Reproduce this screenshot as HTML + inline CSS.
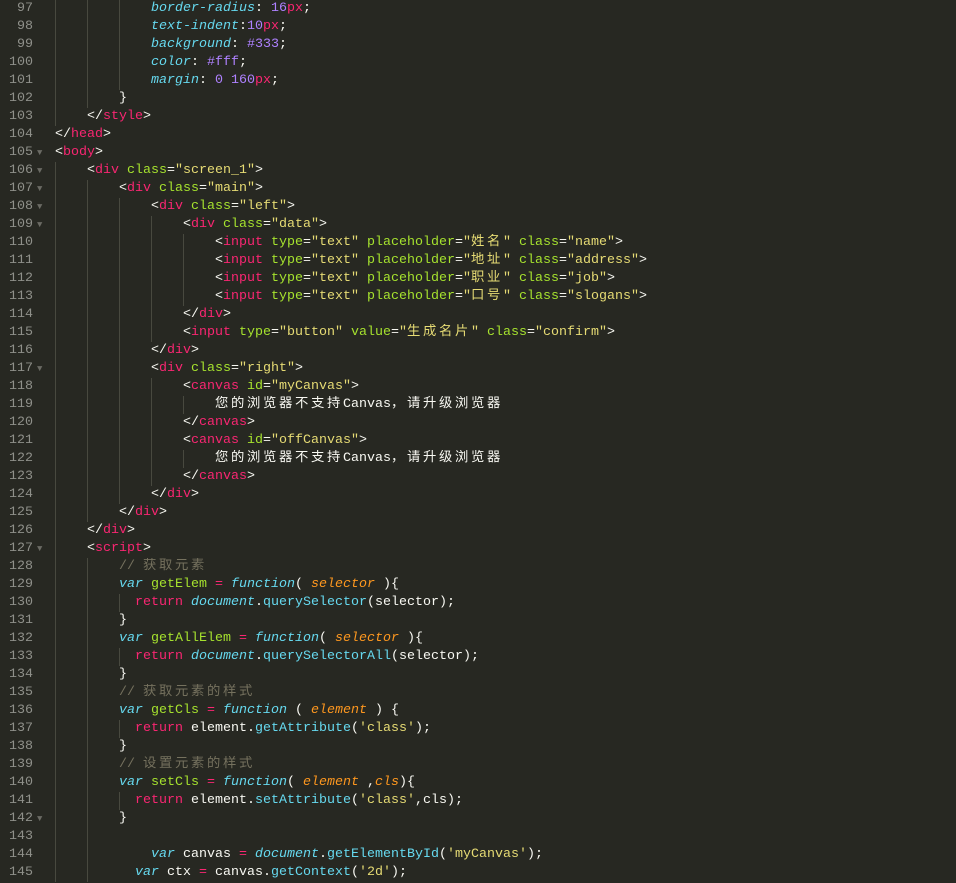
<!DOCTYPE html>
<html><head><meta charset="utf-8"><style>
html,body{margin:0;padding:0;background:#272822;width:956px;height:883px;overflow:hidden}
.l{position:relative;height:18px;line-height:18px;font-family:"Liberation Mono","Noto Sans CJK SC",monospace;font-size:13.33px;color:#f8f8f2;white-space:pre;overflow:hidden}
.n{position:absolute;left:0;width:33px;text-align:right;color:#8f908a}
.f{position:absolute;left:37px;top:0;color:#6b6b64;font-size:9px}
.c{position:absolute;left:55px;top:0;height:18px}
.g{position:absolute;left:55px;top:0;height:18px;background:repeating-linear-gradient(to right,#48493f 0 1px,transparent 1px 32px)}
.t{color:#f92672}.a{color:#a6e22e}.s{color:#e6db74}.m{color:#75715e}.k{color:#66d9ef;font-style:italic}
.b{color:#66d9ef}.p{color:#fd971f;font-style:italic}.u{color:#ae81ff}
.z{font-family:"Noto Sans CJK SC",sans-serif;letter-spacing:2.67px;display:inline-block;height:18px;line-height:18px;vertical-align:top;position:relative;top:-3px}
</style></head><body>
<div class="l"><span class="n">97</span><span class="g" style="width:65px"></span><span class="c">            <span class="k">border-radius</span>: <span class="u">16</span><span class="t">px</span>;</span></div>
<div class="l"><span class="n">98</span><span class="g" style="width:65px"></span><span class="c">            <span class="k">text-indent</span>:<span class="u">10</span><span class="t">px</span>;</span></div>
<div class="l"><span class="n">99</span><span class="g" style="width:65px"></span><span class="c">            <span class="k">background</span>: <span class="u">#333</span>;</span></div>
<div class="l"><span class="n">100</span><span class="g" style="width:65px"></span><span class="c">            <span class="k">color</span>: <span class="u">#fff</span>;</span></div>
<div class="l"><span class="n">101</span><span class="g" style="width:65px"></span><span class="c">            <span class="k">margin</span>: <span class="u">0</span> <span class="u">160</span><span class="t">px</span>;</span></div>
<div class="l"><span class="n">102</span><span class="g" style="width:33px"></span><span class="c">        }</span></div>
<div class="l"><span class="n">103</span><span class="g" style="width:1px"></span><span class="c">    &lt;/<span class="t">style</span>&gt;</span></div>
<div class="l"><span class="n">104</span><span class="c">&lt;/<span class="t">head</span>&gt;</span></div>
<div class="l"><span class="n">105</span><span class="f">▼</span><span class="c">&lt;<span class="t">body</span>&gt;</span></div>
<div class="l"><span class="n">106</span><span class="f">▼</span><span class="g" style="width:1px"></span><span class="c">    &lt;<span class="t">div</span> <span class="a">class</span>=<span class="s">"screen_1"</span>&gt;</span></div>
<div class="l"><span class="n">107</span><span class="f">▼</span><span class="g" style="width:33px"></span><span class="c">        &lt;<span class="t">div</span> <span class="a">class</span>=<span class="s">"main"</span>&gt;</span></div>
<div class="l"><span class="n">108</span><span class="f">▼</span><span class="g" style="width:65px"></span><span class="c">            &lt;<span class="t">div</span> <span class="a">class</span>=<span class="s">"left"</span>&gt;</span></div>
<div class="l"><span class="n">109</span><span class="f">▼</span><span class="g" style="width:97px"></span><span class="c">                &lt;<span class="t">div</span> <span class="a">class</span>=<span class="s">"data"</span>&gt;</span></div>
<div class="l"><span class="n">110</span><span class="g" style="width:129px"></span><span class="c">                    &lt;<span class="t">input</span> <span class="a">type</span>=<span class="s">"text"</span> <span class="a">placeholder</span>=<span class="s">"<span class="z">姓名</span>"</span> <span class="a">class</span>=<span class="s">"name"</span>&gt;</span></div>
<div class="l"><span class="n">111</span><span class="g" style="width:129px"></span><span class="c">                    &lt;<span class="t">input</span> <span class="a">type</span>=<span class="s">"text"</span> <span class="a">placeholder</span>=<span class="s">"<span class="z">地址</span>"</span> <span class="a">class</span>=<span class="s">"address"</span>&gt;</span></div>
<div class="l"><span class="n">112</span><span class="g" style="width:129px"></span><span class="c">                    &lt;<span class="t">input</span> <span class="a">type</span>=<span class="s">"text"</span> <span class="a">placeholder</span>=<span class="s">"<span class="z">职业</span>"</span> <span class="a">class</span>=<span class="s">"job"</span>&gt;</span></div>
<div class="l"><span class="n">113</span><span class="g" style="width:129px"></span><span class="c">                    &lt;<span class="t">input</span> <span class="a">type</span>=<span class="s">"text"</span> <span class="a">placeholder</span>=<span class="s">"<span class="z">口号</span>"</span> <span class="a">class</span>=<span class="s">"slogans"</span>&gt;</span></div>
<div class="l"><span class="n">114</span><span class="g" style="width:97px"></span><span class="c">                &lt;/<span class="t">div</span>&gt;</span></div>
<div class="l"><span class="n">115</span><span class="g" style="width:97px"></span><span class="c">                &lt;<span class="t">input</span> <span class="a">type</span>=<span class="s">"button"</span> <span class="a">value</span>=<span class="s">"<span class="z">生成名片</span>"</span> <span class="a">class</span>=<span class="s">"confirm"</span>&gt;</span></div>
<div class="l"><span class="n">116</span><span class="g" style="width:65px"></span><span class="c">            &lt;/<span class="t">div</span>&gt;</span></div>
<div class="l"><span class="n">117</span><span class="f">▼</span><span class="g" style="width:65px"></span><span class="c">            &lt;<span class="t">div</span> <span class="a">class</span>=<span class="s">"right"</span>&gt;</span></div>
<div class="l"><span class="n">118</span><span class="g" style="width:97px"></span><span class="c">                &lt;<span class="t">canvas</span> <span class="a">id</span>=<span class="s">"myCanvas"</span>&gt;</span></div>
<div class="l"><span class="n">119</span><span class="g" style="width:129px"></span><span class="c">                    <span class="z">您的浏览器不支持</span>Canvas<span class="z">，请升级浏览器</span></span></div>
<div class="l"><span class="n">120</span><span class="g" style="width:97px"></span><span class="c">                &lt;/<span class="t">canvas</span>&gt;</span></div>
<div class="l"><span class="n">121</span><span class="g" style="width:97px"></span><span class="c">                &lt;<span class="t">canvas</span> <span class="a">id</span>=<span class="s">"offCanvas"</span>&gt;</span></div>
<div class="l"><span class="n">122</span><span class="g" style="width:129px"></span><span class="c">                    <span class="z">您的浏览器不支持</span>Canvas<span class="z">，请升级浏览器</span></span></div>
<div class="l"><span class="n">123</span><span class="g" style="width:97px"></span><span class="c">                &lt;/<span class="t">canvas</span>&gt;</span></div>
<div class="l"><span class="n">124</span><span class="g" style="width:65px"></span><span class="c">            &lt;/<span class="t">div</span>&gt;</span></div>
<div class="l"><span class="n">125</span><span class="g" style="width:33px"></span><span class="c">        &lt;/<span class="t">div</span>&gt;</span></div>
<div class="l"><span class="n">126</span><span class="g" style="width:1px"></span><span class="c">    &lt;/<span class="t">div</span>&gt;</span></div>
<div class="l"><span class="n">127</span><span class="f">▼</span><span class="g" style="width:1px"></span><span class="c">    &lt;<span class="t">script</span>&gt;</span></div>
<div class="l"><span class="n">128</span><span class="g" style="width:33px"></span><span class="c">        <span class="m">// <span class="z">获取元素</span></span></span></div>
<div class="l"><span class="n">129</span><span class="g" style="width:33px"></span><span class="c">        <span class="k">var</span> <span class="a">getElem</span> <span class="t">=</span> <span class="k">function</span>( <span class="p">selector</span> ){</span></div>
<div class="l"><span class="n">130</span><span class="g" style="width:65px"></span><span class="c">          <span class="t">return</span> <span class="k">document</span>.<span class="b">querySelector</span>(selector);</span></div>
<div class="l"><span class="n">131</span><span class="g" style="width:33px"></span><span class="c">        }</span></div>
<div class="l"><span class="n">132</span><span class="g" style="width:33px"></span><span class="c">        <span class="k">var</span> <span class="a">getAllElem</span> <span class="t">=</span> <span class="k">function</span>( <span class="p">selector</span> ){</span></div>
<div class="l"><span class="n">133</span><span class="g" style="width:65px"></span><span class="c">          <span class="t">return</span> <span class="k">document</span>.<span class="b">querySelectorAll</span>(selector);</span></div>
<div class="l"><span class="n">134</span><span class="g" style="width:33px"></span><span class="c">        }</span></div>
<div class="l"><span class="n">135</span><span class="g" style="width:33px"></span><span class="c">        <span class="m">// <span class="z">获取元素的样式</span></span></span></div>
<div class="l"><span class="n">136</span><span class="g" style="width:33px"></span><span class="c">        <span class="k">var</span> <span class="a">getCls</span> <span class="t">=</span> <span class="k">function</span> ( <span class="p">element</span> ) {</span></div>
<div class="l"><span class="n">137</span><span class="g" style="width:65px"></span><span class="c">          <span class="t">return</span> element.<span class="b">getAttribute</span>(<span class="s">'class'</span>);</span></div>
<div class="l"><span class="n">138</span><span class="g" style="width:33px"></span><span class="c">        }</span></div>
<div class="l"><span class="n">139</span><span class="g" style="width:33px"></span><span class="c">        <span class="m">// <span class="z">设置元素的样式</span></span></span></div>
<div class="l"><span class="n">140</span><span class="g" style="width:33px"></span><span class="c">        <span class="k">var</span> <span class="a">setCls</span> <span class="t">=</span> <span class="k">function</span>( <span class="p">element</span> ,<span class="p">cls</span>){</span></div>
<div class="l"><span class="n">141</span><span class="g" style="width:65px"></span><span class="c">          <span class="t">return</span> element.<span class="b">setAttribute</span>(<span class="s">'class'</span>,cls);</span></div>
<div class="l"><span class="n">142</span><span class="f">▼</span><span class="g" style="width:33px"></span><span class="c">        }</span></div>
<div class="l"><span class="n">143</span><span class="g" style="width:33px"></span><span class="c"></span></div>
<div class="l"><span class="n">144</span><span class="g" style="width:33px"></span><span class="c">            <span class="k">var</span> canvas <span class="t">=</span> <span class="k">document</span>.<span class="b">getElementById</span>(<span class="s">'myCanvas'</span>);</span></div>
<div class="l"><span class="n">145</span><span class="g" style="width:33px"></span><span class="c">          <span class="k">var</span> ctx <span class="t">=</span> canvas.<span class="b">getContext</span>(<span class="s">'2d'</span>);</span></div>
</body></html>
